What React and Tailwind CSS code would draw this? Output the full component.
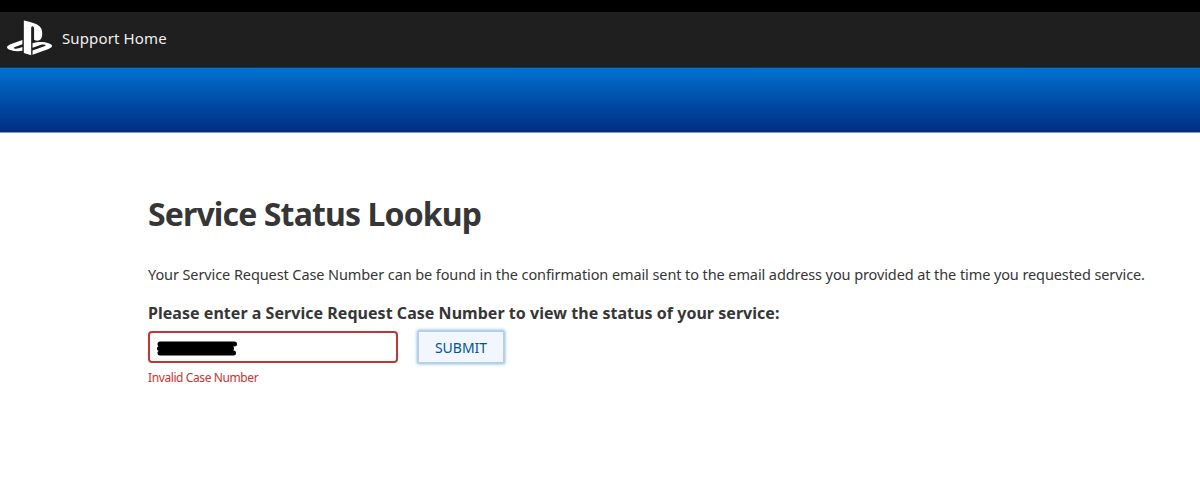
import {useState} from 'react';
import {FaPlaystation} from 'react-icons/fa';

function App() {
  return (
    <div className="h-[482px] w-full overflow-hidden bg-white font-['Noto_Sans',sans-serif] text-[#363636]">
      <Header />
      <div className="h-[65px] border-b border-[#7d9cc9] bg-linear-to-b from-[#0072d0] to-[#002c83]" />
      <main className="pt-[61px] pl-[148px]">
        <h1 className="text-[32px] leading-10 font-bold tracking-[-0.87px] whitespace-nowrap">Service Status Lookup</h1>
        <p className="mt-[30px] text-[14.5px] leading-5 tracking-[-0.095px] whitespace-nowrap">
          Your Service Request Case Number can be found in the confirmation email sent to the email address you
          provided at the time you requested service.
        </p>
        <LookupForm />
      </main>
    </div>
  );
}

const Header = () => {
  return (
    <header className="h-[68px] border-t-[12px] border-b border-t-black border-b-[#0b3a66] bg-[#1f1f1f]">
      <a
        href="#"
        className="flex h-full items-center pb-1 pl-[7px] text-white"
      >
        <FaPlaystation className="h-10 w-[45px]" />
        <span className="ml-2.5 text-[15px] leading-5 tracking-[0.13px] text-[#f0f0f0]">Support Home</span>
      </a>
    </header>
  );
};

const LookupForm = () => {
  const [invalid, setInvalid] = useState(true);

  const handleSubmit = (e) => {
    e.preventDefault();
    setInvalid(true);
  };

  return (
    <form
      onSubmit={handleSubmit}
      className="mt-[17px]"
    >
      <label className="block text-base leading-6 font-bold tracking-[0.035px] whitespace-nowrap">
        Please enter a Service Request Case Number to view the status of your service:
      </label>
      <div className="mt-1.5 flex items-center gap-5">
        <div
          className={`flex h-8 w-[250px] items-center rounded border-2 pt-[3px] pl-[7px] ${invalid ? 'border-[#c53434]' : 'border-[#cccccc]'}`}
        >
          <Redaction />
        </div>
        <button
          type="submit"
          className="h-8 w-[86px] border border-[#c2ccd8] bg-[#f2f7ff] pt-px text-[14px] text-[#00549a] shadow-[0_0_3px_1px_#7fb7ee]"
        >
          SUBMIT
        </button>
      </div>
      {invalid && (
        <p className="mt-[7px] text-xs leading-4 tracking-[-0.4px] text-[#c53434]">Invalid Case Number</p>
      )}
    </form>
  );
};

const Redaction = () => {
  return (
    <svg
      viewBox="0 0 81 16"
      className="h-4 w-[81px]"
    >
      <path
        d="M3 3H77.5M2.5 7.5H74.5M3 12H76.5"
        stroke="#000"
        strokeWidth="5"
        strokeLinecap="round"
      />
    </svg>
  );
};

export default App;
